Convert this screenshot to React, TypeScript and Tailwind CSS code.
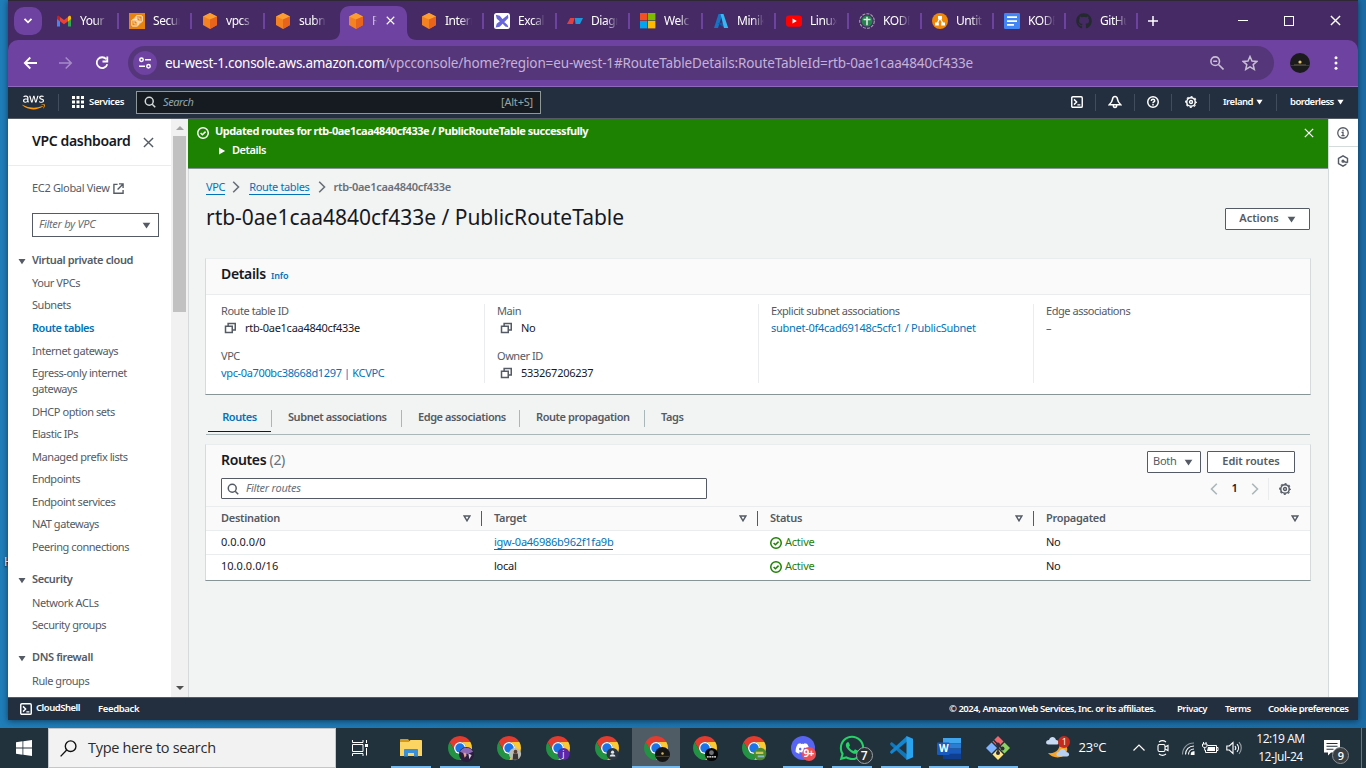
import React from "react";
import { FaAws, FaDiscord, FaGithub, FaWhatsapp } from "react-icons/fa";

/* ---------- small shared drawings ---------- */

const Caret = ({ className = "" }: { className?: string }) => (
  <svg viewBox="0 0 10 8" className={"shrink-0 " + className} fill="currentColor">
    <path d="M0.6 0.8h8.8L5 7.4z" />
  </svg>
);

const SortCaret = () => (
  <svg viewBox="0 0 10 9" className="h-[7px] w-2 shrink-0" fill="none" stroke="#545b64" strokeWidth="1.9">
    <path d="M1.4 1.4h7.2L5 7.4z" />
  </svg>
);

const Check = ({ className = "" }: { className?: string }) => (
  <svg viewBox="0 0 16 16" className={"shrink-0 " + className} fill="none" stroke="currentColor" strokeWidth="2">
    <circle cx="8" cy="8" r="7" />
    <path d="M4.8 8l2.4 2.4 4.2-4.2" />
  </svg>
);

const Search = ({ className = "" }: { className?: string }) => (
  <svg viewBox="0 0 16 16" className={"shrink-0 " + className} fill="none" stroke="currentColor" strokeWidth="2">
    <circle cx="7" cy="7" r="5.3" />
    <path d="M11 11l4 4" />
  </svg>
);

const Copy = () => (
  <svg viewBox="0 0 16 16" className="h-3 w-3 shrink-0" fill="none" stroke="#545b64" strokeWidth="2">
    <path d="M2 5.500h9V14H2z" />
    <path d="M5.500 5.500V2H15v8.500h-3.500" />
  </svg>
);

const Gear = ({ className = "" }: { className?: string }) => (
  <svg viewBox="0 0 16 16" className={"shrink-0 " + className} fill="none" stroke="currentColor">
    <circle cx="8" cy="8" r="5.700" strokeWidth="2" />
    <circle cx="8" cy="8" r="7.100" strokeWidth="1.500" strokeDasharray="2.8 2.776" strokeDashoffset="1.4" />
    <circle cx="8" cy="8" r="2" strokeWidth="1.800" />
  </svg>
);

const Shell = ({ className = "" }: { className?: string }) => (
  <svg viewBox="0 0 16 16" className={"shrink-0 " + className} fill="none" stroke="currentColor" strokeWidth="1.900">
    <rect x="1" y="1" width="14" height="14" rx="1.500" />
    <path d="M4 4.500L7.500 8 4 11.500M8.500 11.800h4" />
  </svg>
);

const Cross = ({ className = "" }: { className?: string }) => (
  <svg viewBox="0 0 12 12" className={"shrink-0 " + className} fill="none" stroke="currentColor" strokeWidth="1.500">
    <path d="M1 1l10 10M11 1L1 11" />
  </svg>
);

/* ---------- favicons ---------- */

const Cube = () => (
  <svg viewBox="0 0 16 16" className="h-4 w-4 shrink-0">
    <path d="M8 0l7 3.500v8.600L8 16 1 12.100V3.500z" fill="#f58220" />
    <path d="M8 0l7 3.500-7 3-7-3z" fill="#fb9d32" />
    <path d="M8 6.500l7-3v8.600L8 16z" fill="#e8631c" />
  </svg>
);

const Gmail = () => (
  <svg viewBox="0 0 16 16" className="h-4 w-4 shrink-0">
    <path d="M1 4v9.500h3V7z" fill="#4285f4" />
    <path d="M15 4v9.500h-3V7z" fill="#34a853" />
    <path d="M12 3.800l1-.9c1-.6 2 0 2 1.200V6l-3 2.400z" fill="#fbbc04" />
    <path d="M4 4l4 3 4-3v4.200l-4 3-4-3z" fill="#ea4335" />
    <path d="M4 3.800l-1-.9c-1-.6-2 0-2 1.200V6l3 2.400z" fill="#c5221f" />
  </svg>
);

const Ec2 = () => (
  <svg viewBox="0 0 16 16" className="h-4 w-4 shrink-0" fill="none" stroke="#fff">
    <rect width="16" height="16" fill="#e8820f" stroke="none" />
    <rect x="2.800" y="6.800" width="6.200" height="6.200" rx=".8" strokeWidth=".9" />
    <rect x="5" y="5" width="6" height="6" rx=".8" strokeWidth=".7" />
    <rect x="7" y="2.800" width="6.200" height="6.200" rx=".8" strokeWidth=".9" />
  </svg>
);

const Excalidraw = () => (
  <svg viewBox="0 0 16 16" className="h-4 w-4 shrink-0">
    <rect width="16" height="16" rx="2.500" fill="#fff" />
    <path d="M1.800 1.800l4 1 3 3.600L6.600 9 2.800 5.800zM14 1.800l.3 3.200-8.600 8.700-4 .8 1-3.700zM10.300 9l3.200 3 .8 2.200-3-.8-2.600-2.700z" fill="#6965db" />
  </svg>
);

const Diagram = () => (
  <svg viewBox="0 0 16 16" className="h-4 w-4 shrink-0">
    <path d="M3.200 5H7.500L6 11H0z" fill="#e04040" />
    <path d="M7.800 5H16l-3 6H8.500z" fill="#2196d8" />
  </svg>
);

const Microsoft = () => (
  <svg viewBox="0 0 16 16" className="h-4 w-4 shrink-0">
    <path d="M0 0h7.400v7.400H0z" fill="#f25022" />
    <path d="M8 0h7.400v7.400H8z" fill="#7fba00" />
    <path d="M0 8h7.400v7.400H0z" fill="#00a4ef" />
    <path d="M8 8h7.400v7.400H8z" fill="#ffb900" />
  </svg>
);

const Azure = () => (
  <svg viewBox="0 0 16 16" className="h-4 w-4 shrink-0">
    <path d="M5.500 1h4L5 15H1z" fill="#1673c4" />
    <path d="M4.500 10l6.500-.5 1 5.500z" fill="#0f5ba8" />
    <path d="M7.500 1h3l4.700 14H11z" fill="#38b6f1" />
  </svg>
);

const Youtube = () => (
  <svg viewBox="0 0 16 16" className="h-4 w-4 shrink-0">
    <rect y="2.400" width="16" height="11.400" rx="3" fill="#ff0000" />
    <path d="M6.500 5.600v5l4.300-2.500z" fill="#fff" />
  </svg>
);

const Kode = () => (
  <svg viewBox="0 0 16 16" className="h-4 w-4 shrink-0">
    <circle cx="8" cy="8" r="7.300" fill="none" stroke="#a9a4ad" strokeWidth="1.100" strokeDasharray="3 1.200" />
    <circle cx="8" cy="8" r="5.500" fill="#23824c" />
    <path d="M7.200 3.800h1.600v2H11.500v1.500H8.800v5H7.200v-5H4.500V5.800h2.700z" fill="#dfe9e2" />
  </svg>
);

const Drawio = () => (
  <svg viewBox="0 0 16 16" className="h-4 w-4 shrink-0">
    <circle cx="8" cy="8" r="8" fill="#f08705" />
    <path d="M8 5L5 10.500M8 5l3 5.500" stroke="#fff" strokeWidth="1.300" />
    <path d="M6 3h4v3.200H6zM3 9.500h3.800v3H3zM9.200 9.500H13v3H9.200z" fill="#fff" />
  </svg>
);

const Docs = () => (
  <svg viewBox="0 0 16 16" className="h-4 w-4 shrink-0">
    <rect width="16" height="16" rx="1.200" fill="#4285f4" />
    <path d="M3 3.300h10v1.700H3zM3 7.200h10v1.700H3zM3 11h7v1.700H3z" fill="#fff" />
  </svg>
);

const Github = () => <FaGithub className="h-4 w-4 shrink-0 text-[#24292f]" />;

/* ---------- browser chrome ---------- */

const tabs: { icon: React.FC; label: string; active?: boolean; narrow?: boolean }[] = [
  { icon: Gmail, label: "Your" },
  { icon: Ec2, label: "Secur" },
  { icon: Cube, label: "vpcs" },
  { icon: Cube, label: "subn" },
  { icon: Cube, label: "R", active: true },
  { icon: Cube, label: "Intern" },
  { icon: Excalidraw, label: "Excal" },
  { icon: Diagram, label: "Diagr" },
  { icon: Microsoft, label: "Welc" },
  { icon: Azure, label: "Minik" },
  { icon: Youtube, label: "Linux" },
  { icon: Kode, label: "KODE" },
  { icon: Drawio, label: "Untit", narrow: true },
  { icon: Docs, label: "KODE", narrow: true },
  { icon: Github, label: "GitHu", narrow: true },
];

const TabStrip = () => (
  <div className="flex h-[39px] shrink-0 items-center bg-[#462a66] pl-1.5">
    <div className="flex h-7 w-7 items-center justify-center rounded-[10px] bg-[#6d42a0]">
      <svg viewBox="0 0 10 6" className="h-1.5 w-2.5" fill="none" stroke="#fff" strokeWidth="1.800">
        <path d="M1.500 .8L5 4.300 8.500 .8" />
      </svg>
    </div>
    <div className="ml-1 flex h-full">
      {tabs.map((t, i) => (
        <div key={i} className={"relative flex h-full items-center pl-2.5 " + (t.narrow ? "w-[72px]" : "w-[73px]")}>
          {t.active && (
            <svg viewBox="0 0 87 34" className="absolute bottom-0 -left-2 h-[34px] w-[87px]" fill="#6d42a0">
              <path d="M0 34c7 0 10-4 10-10V10C10 4 14 0 20 0h47c6 0 10 4 10 10v14c0 6 3 10 10 10z" />
            </svg>
          )}
          <div className="relative flex items-center">
            <t.icon />
            <span
              className={
                "ml-2 overflow-hidden text-[12px] tracking-[-0.450px] whitespace-nowrap text-white " +
                (t.active
                  ? "w-[5px] [mask-image:linear-gradient(to_right,black,transparent)]"
                  : "w-[27px] [mask-image:linear-gradient(to_right,black_55%,transparent)]")
              }
            >
              {t.label}
            </span>
            {t.active && <Cross className="ml-[9px] h-[9px] w-[9px] text-white" />}
          </div>
          {!t.active && i !== 3 && <div className="absolute right-0 h-4 w-0.5 bg-[#6d42a0]" />}
        </div>
      ))}
    </div>
    <svg viewBox="0 0 10 10" className="ml-2.5 h-2.5 w-2.5" stroke="#fff" strokeWidth="1.500">
      <path d="M5 0v10M0 5h10" />
    </svg>
    <div className="mr-[17px] ml-auto flex items-center gap-9 text-white">
      <div className="h-px w-2.5 bg-white" />
      <div className="h-[10px] w-[10px] border border-white" />
      <Cross className="h-[11px] w-[11px]" />
    </div>
  </div>
);

const Toolbar = () => (
  <div className="shrink-0 bg-[#462a66]">
    <div className="flex h-[46px] items-center rounded-t-[10px] bg-[#6d42a0] pl-[15px]">
      <svg viewBox="0 0 14 14" className="h-3.5 w-3.5" fill="none" stroke="#fff" strokeWidth="1.800">
        <path d="M14 7H2M7.300 1.500L1.800 7l5.500 5.500" />
      </svg>
      <svg viewBox="0 0 14 14" className="ml-[22px] h-3.5 w-3.5" fill="none" stroke="#a78ac8" strokeWidth="1.600">
        <path d="M0 7h12M6.700 1.500L12.200 7l-5.500 5.500" />
      </svg>
      <svg viewBox="0 0 14 14" className="ml-[22px] h-3.5 w-3.5" fill="none" stroke="#fff" strokeWidth="1.800">
        <path d="M11.300 3.200A5.400 5.400 0 1 0 12.300 8.200" />
        <path d="M12.300 .5v5H7.500" />
      </svg>
      <div className="ml-[19px] flex h-[34px] w-[1146px] items-center rounded-full bg-[#55367a] pl-[5px]">
        <div className="flex h-6 w-6 items-center justify-center rounded-full bg-[#6d42a0]">
          <svg viewBox="0 0 12 12" className="h-3 w-3" fill="none" stroke="#fff" strokeWidth="1.500">
            <circle cx="2.500" cy="2.800" r="1.700" />
            <path d="M6 2.800h6M0 9.200h6" />
            <circle cx="9.500" cy="9.200" r="1.700" />
          </svg>
        </div>
        <div className="ml-2 font-['Noto_Sans'] text-[13.500px] tracking-[-0.130px] whitespace-nowrap text-[#c4b2d8]">
          <span className="tracking-[-0.260px] text-white">eu-west-1.console.aws.amazon.com</span>
          /vpcconsole/home?region=eu-west-1#RouteTableDetails:RouteTableId=rtb-0ae1caa4840cf433e
        </div>
        <svg viewBox="0 0 14 14" className="mr-[18px] ml-auto h-3.5 w-3.5" fill="none" stroke="#c9bfd3" strokeWidth="1.600">
          <circle cx="5.200" cy="5.200" r="4.300" />
          <path d="M8.500 8.500l5 5M3.200 5.200h4" />
        </svg>
        <svg viewBox="0 0 16 16" className="mr-4 h-4 w-4" fill="none" stroke="#c9bfd3" strokeWidth="1.500">
          <path d="M8 1.500l2 4.500 4.900.4-3.700 3.200 1.100 4.800L8 11.900l-4.300 2.500 1.100-4.800L1.100 6.400 6 6z" />
        </svg>
      </div>
      <svg viewBox="0 0 20 20" className="ml-4 h-5 w-5">
        <circle cx="10" cy="10" r="10" fill="#1b1b1d" />
        <path d="M.5 12.500h19" stroke="#3e3a33" />
        <path d="M4 11.800h12" stroke="#6b6252" strokeWidth=".7" />
        <circle cx="10" cy="9" r="1.600" fill="#e3c56a" />
      </svg>
      <svg viewBox="0 0 4 14" className="ml-6 h-3.5 w-1" fill="#fff">
        <circle cx="2" cy="1.800" r="1.500" />
        <circle cx="2" cy="7" r="1.500" />
        <circle cx="2" cy="12.200" r="1.500" />
      </svg>
    </div>
    <div className="h-px bg-[#8d68bb]" />
  </div>
);

/* ---------- AWS console ---------- */

const NavDivider = ({ className }: { className: string }) => <div className={"h-[17px] w-px bg-[#414d5c] " + className} />;

const ConsoleNav = () => (
  <div className="flex h-8 shrink-0 items-center border-b border-[#545b64] bg-[#232f3e] pb-px text-white">
    <div className="relative ml-3.5 h-[23px] w-[23px]">
      <FaAws className="absolute inset-0 h-[23px] w-[23px] [clip-path:inset(0_0_40%_0)]" />
      <FaAws className="absolute inset-0 h-[23px] w-[23px] text-[#f90] [clip-path:inset(60%_0_0_0)]" />
    </div>
    <NavDivider className="ml-[13px]" />
    <svg viewBox="0 0 12 12" className="ml-[13px] h-3 w-3" fill="#fff">
      <path d="M0 0h3v3H0zM4.500 0h3v3h-3zM9 0h3v3H9zM0 4.500h3v3H0zM4.500 4.500h3v3h-3zM9 4.500h3v3H9zM0 9h3v3H0zM4.500 9h3v3h-3zM9 9h3v3H9z" />
    </svg>
    <span className="ml-[5px] w-[35px] text-[9.500px] font-semibold tracking-[-0.350px] whitespace-nowrap">Services</span>
    <div className="ml-3 flex h-[23px] w-[405px] items-center border border-[#8d9999] bg-[#161b22] px-[7px] text-[11px]">
      <Search className="h-3 w-3 text-[#d5dbdb]" />
      <span className="ml-[7px] tracking-[-0.400px] text-[#95a5a6] italic">Search</span>
      <span className="ml-auto tracking-[-0.200px] text-[#95a5a6]">[Alt+S]</span>
    </div>
    <Shell className="ml-[530px] h-3 w-3" />
    <NavDivider className="ml-3" />
    <svg viewBox="0 0 14 14" className="ml-3 h-3.5 w-3.5" fill="none" stroke="#fff" strokeWidth="1.500">
      <path d="M7 1.500C5.300 1.500 4.600 3 4.400 4.600 4.200 6.500 3 8 1.300 9.800h11.400C11 8 9.800 6.500 9.600 4.600 9.400 3 8.700 1.500 7 1.500zM5.300 10.300c0 2.800 3.400 2.800 3.400 0" />
    </svg>
    <NavDivider className="ml-3" />
    <svg viewBox="0 0 16 16" className="ml-3 h-3 w-3" fill="none" stroke="#fff" strokeWidth="2">
      <circle cx="8" cy="8" r="7" />
      <path d="M5.700 6.500C5.700 3.400 10.300 3.600 10.300 6.300 10.300 7.900 8 7.900 8 9.500M8 10.700v1.900" />
    </svg>
    <NavDivider className="ml-3" />
    <Gear className="ml-[13px] h-3 w-3" />
    <NavDivider className="ml-3" />
    <span className="ml-[13px] w-[29px] text-[9.500px] font-semibold tracking-[-0.450px] whitespace-nowrap">Ireland</span>
    <Caret className="ml-1 h-1.5 w-[7px]" />
    <NavDivider className="ml-[13px]" />
    <span className="ml-[13px] w-[43px] text-[9.500px] font-semibold tracking-[-0.520px] whitespace-nowrap">borderless</span>
    <Caret className="ml-1 h-1.5 w-[7px]" />
  </div>
);

const sections = [
  {
    title: "Virtual private cloud",
    items: [
      "Your VPCs",
      "Subnets",
      "Route tables",
      "Internet gateways",
      "Egress-only internet gateways",
      "DHCP option sets",
      "Elastic IPs",
      "Managed prefix lists",
      "Endpoints",
      "Endpoint services",
      "NAT gateways",
      "Peering connections",
    ],
  },
  { title: "Security", items: ["Network ACLs", "Security groups"] },
  { title: "DNS firewall", items: ["Rule groups"] },
];

const Sidebar = () => (
  <div className="flex w-[180px] shrink-0 bg-white">
    <div className="w-[163px] overflow-hidden text-[#545b64]">
      <div className="flex h-[47px] items-center border-b border-[#eaeded] pl-6 text-[14px] font-semibold tracking-[-0.350px] text-[#16191f]">
        <span className="w-[97px] pb-[3px] whitespace-nowrap">VPC dashboard</span>
        <Cross className="ml-[14px] h-[11px] w-[11px] text-[#545b64]" />
      </div>
      <div className="mt-[14px] flex h-4 items-center pl-6 text-[11px] tracking-[-0.330px]">
        EC2 Global View
        <svg viewBox="0 0 12 12" className="ml-1 h-[11px] w-[11px]" fill="none" stroke="currentColor" strokeWidth="1.500">
          <path d="M5 1.500H1v9.700h10V7.500M6.500 1H11v4.500M11 1L5 7" />
        </svg>
      </div>
      <div className="mt-[17px] ml-6 flex h-[24px] w-[127px] items-center justify-between border border-[#545b64] px-1.5 pb-px text-[11px] tracking-[-0.300px] text-[#687078] italic">
        Filter by VPC
        <Caret className="mt-px mr-[1px] h-[7px] w-[9px] text-[#545b64]" />
      </div>
      <div className="mt-[14.500px]">
        {sections.map((s) => (
          <div key={s.title} className="mb-[13px]">
            <div className="flex h-[20.200px] items-start pl-2.5 text-[11px] leading-4 font-semibold tracking-[-0.380px]">
              <Caret className="mt-1.5 mr-1.5 h-[7px] w-2" />
              {s.title}
            </div>
            {s.items.map((i) => (
              <div
                key={i}
                className={
                  "py-[3.270px] pr-6 pl-6 text-[11px] leading-4 " +
                  (i === "Route tables" ? "font-semibold tracking-[-0.450px] text-[#0073bb]" : "tracking-[-0.440px]")
                }
              >
                {i}
              </div>
            ))}
          </div>
        ))}
      </div>
    </div>
    <div className="flex w-[17px] flex-col items-center bg-[#f1f1f1]">
      <svg viewBox="0 0 8 4" className="mt-[7px] h-1 w-2" fill="#a3a3a3">
        <path d="M0 4l4-4 4 4z" />
      </svg>
      <div className="mt-1.5 h-44 w-[13px] bg-[#c1c1c1]" />
      <svg viewBox="0 0 8 4" className="mt-auto mb-[7px] h-1 w-2" fill="#505050">
        <path d="M0 0l4 4 4-4z" />
      </svg>
    </div>
  </div>
);

const Flash = () => (
  <div className="flex h-[50px] shrink-0 items-start border-b border-[#879596] bg-[#1d8102] text-white">
    <Check className="mt-2 ml-[9px] h-3 w-3" />
    <div className="ml-[6px] text-[11px] font-bold whitespace-nowrap">
      <div className="mt-1 leading-4 tracking-[-0.460px]">
        Updated routes for rtb-0ae1caa4840cf433e / PublicRouteTable successfully
      </div>
      <div className="mt-[3px] flex items-center pl-1 leading-4 font-semibold tracking-[-0.450px]">
        <svg viewBox="0 0 8 8" className="mt-0.5 mr-1.5 h-2 w-[7px]" fill="#fff">
          <path d="M0 0l7 4-7 4z" />
        </svg>
        Details
      </div>
    </div>
    <Cross className="mt-[9px] mr-[14px] ml-auto h-2.5 w-2.5" />
  </div>
);

const Chevron = ({ className = "", left = false }: { className?: string; left?: boolean }) => (
  <svg viewBox="0 0 8 12" className={"h-3 w-2 shrink-0 " + className} fill="none" stroke="currentColor" strokeWidth="1.600">
    <path d={left ? "M6.800 .8L1.500 6l5.300 5.200" : "M1.200 .8L6.500 6l-5.300 5.200"} />
  </svg>
);

const Field = ({ label, children }: { label: string; children: React.ReactNode }) => (
  <div className="h-[45px] text-[11px] leading-4 whitespace-nowrap">
    <div className="tracking-[-0.450px] text-[#545b64]">{label}</div>
    <div className="mt-px flex items-center tracking-[-0.270px] text-[#16191f]">{children}</div>
  </div>
);

const Copyable = ({ children }: { children: React.ReactNode }) => (
  <span className="flex items-center gap-[9px] pl-[3px]">
    <Copy />
    {children}
  </span>
);

const DetailsCard = () => (
  <div className="mt-[28px] h-[137px] border border-[#d5dbdb] border-t-[#eaeded] border-b-[#879596] bg-white">
    <div className="flex h-9 items-center border-b border-[#eaeded] bg-[#fafafa] pb-1.5 pl-[15px]">
      <span className="w-[45px] text-[14px] font-semibold tracking-[-0.350px] text-[#16191f]">Details</span>
      <span className="mt-[5px] ml-[5px] text-[9px] font-semibold tracking-[-0.100px] text-[#0073bb]">Info</span>
    </div>
    <div className="mt-2 flex h-[80px]">
      <div className="mt-px w-[279px] border-r border-[#eaeded] pl-[15px]">
        <div className="-mt-px">
          <Field label="Route table ID">
            <Copyable>rtb-0ae1caa4840cf433e</Copyable>
          </Field>
          <Field label="VPC">
            <span className="tracking-[-0.350px] text-[#0073bb]">vpc-0a700bc38668d1297 | KCVPC</span>
          </Field>
        </div>
      </div>
      <div className="mt-px w-[274px] border-r border-[#eaeded] pl-3">
        <div className="-mt-px">
          <Field label="Main">
            <Copyable>No</Copyable>
          </Field>
          <Field label="Owner ID">
            <Copyable>533267206237</Copyable>
          </Field>
        </div>
      </div>
      <div className="mt-px w-[275px] border-r border-[#eaeded] pl-3">
        <div className="-mt-px">
          <Field label="Explicit subnet associations">
            <span className="text-[#0073bb]">subnet-0f4cad69148c5cfc1 / PublicSubnet</span>
          </Field>
        </div>
      </div>
      <div className="pl-3">
        <Field label="Edge associations">
          <span className="text-[#545b64]">–</span>
        </Field>
      </div>
    </div>
  </div>
);

const DetailTabs = () => (
  <div className="mt-[7px] mr-px ml-px flex h-[33px] shrink-0 border-b border-[#aab7b8] pl-0.5 text-[11px] font-semibold tracking-[-0.430px] whitespace-nowrap text-[#545b64]">
    <div className="flex w-[63px] items-center justify-center border-b-2 border-transparent text-[#0073bb] shadow-[0_-1px_0_#16191f_inset]">
      Routes
    </div>
    {[
      ["Subnet associations", "w-[130px]"],
      ["Edge associations", "w-[118px]"],
      ["Route propagation", "w-[125px]"],
      ["Tags", "w-[58px]"],
    ].map(([label, w]) => (
      <div key={label} className={"flex h-8 items-center pb-0.5 " + w}>
        <div className="mt-0.5 h-[17px] w-px bg-[#aab7b8]" />
        <span className="ml-4">{label}</span>
      </div>
    ))}
  </div>
);

const rows = [
  { dest: "0.0.0.0/0", target: "igw-0a46986b962f1fa9b", link: true },
  { dest: "10.0.0.0/16", target: "local", link: false },
];

const RoutesCard = () => (
  <div className="mt-[9px] h-[137px] border border-[#d5dbdb] border-t-[#eaeded] border-b-[#879596] bg-white text-[11px] tracking-[-0.240px] text-[#16191f]">
    <div className="h-[62px] border-b border-[#eaeded] bg-[#fafafa] pt-1.5 pr-[15px] pl-[15px]">
      <div className="flex h-[22px] items-center">
        <span className="pb-1.5 text-[14px] font-semibold tracking-[-0.350px]">
          Routes <span className="font-normal text-[#687078]">(2)</span>
        </span>
        <div className="ml-auto flex h-[22px] w-[54px] items-center justify-between rounded-[1px] border border-[#545b64] bg-white pr-[7px] pb-px pl-[5px] text-[#545b64]">
          Both
          <Caret className="mt-px h-[7px] w-[9px]" />
        </div>
        <div className="ml-1.5 flex h-[22px] w-[88px] items-center justify-center rounded-[1px] border border-[#545b64] bg-white pb-px font-semibold tracking-[-0.080px] text-[#545b64]">
          Edit routes
        </div>
      </div>
      <div className="mt-[5px] flex h-[21px] items-center">
        <div className="flex h-[21px] w-[486px] items-center rounded-[1px] border border-[#545b64] bg-white pl-[5px]">
          <Search className="h-3 w-3 text-[#545b64]" />
          <span className="ml-[7px] text-[#687078] italic">Filter routes</span>
        </div>
        <Chevron left className="ml-auto text-[#aab7b8]" />
        <span className="w-[33px] pb-px text-center font-semibold">1</span>
        <Chevron className="text-[#aab7b8]" />
        <div className="ml-[9px] h-[22px] w-px bg-[#eaeded]" />
        <Gear className="mr-1 ml-2.5 h-3 w-3 text-[#545b64]" />
      </div>
    </div>
    <div className="flex h-6 items-center border-b border-[#eaeded] bg-[#fafafa] pl-[15px] font-semibold tracking-[-0.300px] text-[#545b64]">
      {["Destination", "Target", "Status", "Propagated"].map((h, i) => (
        <div
          key={h}
          className={
            "flex items-center justify-between " +
            (i === 0 ? "w-[261px] pr-[10px]" : i === 3 ? "w-[265px] pl-3" : "w-[276px] pr-[10px] pl-3") +
            (i < 3 ? " h-[15px] border-r border-[#545b64]" : "")
          }
        >
          {h}
          <SortCaret />
        </div>
      ))}
    </div>
    {rows.map((r) => (
      <div key={r.dest} className="flex h-6 items-center border-b border-[#eaeded] pl-[15px] last:border-transparent">
        <div className="w-[273px] tracking-[0.020px]">{r.dest}</div>
        <div className="w-[276px]">
          <span className={r.link ? "inline-block border-b border-[#0073bb] leading-[14px] text-[#0073bb]" : ""}>{r.target}</span>
        </div>
        <div className="flex w-[276px] items-center gap-[3px] text-[#1d8102]">
          <Check className="h-3 w-3" />
          Active
        </div>
        <div>No</div>
      </div>
    ))}
  </div>
);

const Content = () => (
  <div className="flex-1 border-l border-[#d5dbdb] bg-[#f2f3f3] pr-[17px] pl-4">
    <div className="mt-[10px] flex h-4 items-center text-[11px] tracking-[-0.350px] whitespace-nowrap">
      <span className="ml-[1px] border-b border-[#0073bb] leading-[14px] text-[#0073bb]">VPC</span>
      <Chevron className="ml-[7px] text-[#687078]" />
      <span className="ml-[9px] border-b border-[#0073bb] leading-[14px] text-[#0073bb]">Route tables</span>
      <Chevron className="ml-2 text-[#687078]" />
      <span className="ml-2 font-semibold tracking-[-0.300px] text-[#687078]">rtb-0ae1caa4840cf433e</span>
    </div>
    <div className="mt-[11px] flex h-[24px] items-center justify-between pr-px pl-[1px]">
      <h1 className="text-[21px] tracking-[-0.020px] whitespace-nowrap text-[#16191f]">rtb-0ae1caa4840cf433e / PublicRouteTable</h1>
      <div className="mt-0.5 flex h-[22px] w-[85px] items-center justify-center gap-2 rounded-[1px] border border-[#545b64] bg-white pb-px text-[11px] font-semibold tracking-[-0.050px] text-[#545b64]">
        Actions
        <Caret className="mt-px h-[7px] w-[9px]" />
      </div>
    </div>
    <DetailsCard />
    <DetailTabs />
    <RoutesCard />
  </div>
);

const ConsoleFooter = () => (
  <div className="flex h-[23px] shrink-0 items-center border-t border-[#545b64] bg-[#232f3e] pl-3 text-[9.500px] font-semibold tracking-[-0.480px] whitespace-nowrap text-white">
    <Shell className="h-3 w-3" />
    <span className="ml-1 w-[44px] pb-0.5">CloudShell</span>
    <span className="ml-[18px] tracking-[-0.350px]">Feedback</span>
    <span className="ml-auto w-[206px]">© 2024, Amazon Web Services, Inc. or its affiliates.</span>
    <span className="ml-[22px] w-[29px]">Privacy</span>
    <span className="ml-[19px] w-[25px]">Terms</span>
    <span className="mr-3 ml-[18px] w-[78px]">Cookie preferences</span>
  </div>
);

const BrowserWindow = () => (
  <div className="ml-2 flex h-[720px] w-[1350px] flex-col border-t border-[#2d2833] font-['Noto_Sans',sans-serif] shadow-[0_1px_6px_rgba(0,0,0,0.5)]">
    <TabStrip />
    <Toolbar />
    <ConsoleNav />
    <div className="flex min-h-0 flex-1">
      <Sidebar />
      <div className="flex w-[1140px] flex-col">
        <Flash />
        <Content />
      </div>
      <div className="flex flex-1 flex-col items-center border-l border-[#d5dbdb] bg-white">
        <div className="flex h-[28px] w-full items-center justify-center border-b border-[#d5dbdb] pr-px">
          <svg viewBox="0 0 16 16" className="h-3 w-3" fill="none" stroke="#545b64" strokeWidth="1.700">
            <circle cx="8" cy="8" r="7" />
            <path d="M8 3.800v2M6 7.300h2v4.200M5.800 11.500h4.400" />
          </svg>
        </div>
        <svg viewBox="0 0 16 16" className="mt-2 mr-px h-3 w-3" fill="none" stroke="#545b64" strokeWidth="1.900">
          <path d="M12.500 12.300L8 14.800l-6-3.400V4.600l6-3.400 6 3.400v5.700M8.500 8.500l5.500 1.800" />
          <circle cx="8" cy="8.300" r="1.200" />
        </svg>
      </div>
    </div>
    <ConsoleFooter />
  </div>
);

/* ---------- Windows taskbar ---------- */

const Chrome = ({ badge }: { badge: React.ReactNode }) => (
  <div className="relative h-6 w-6">
    <svg viewBox="0 0 24 24" className="h-6 w-6">
      <path d="M1.610 6A12 12 0 0 1 22.390 6H12A6 6 0 0 0 6.800 15Z" fill="#e33b2e" />
      <path d="M22.390 6A12 12 0 0 1 12 24L17.200 15A6 6 0 0 0 12 6Z" fill="#fcc934" />
      <path d="M12 24A12 12 0 0 1 1.610 6L6.800 15A6 6 0 0 0 17.200 15Z" fill="#229342" />
      <circle cx="12" cy="12" r="6" fill="#fff" />
      <circle cx="12" cy="12" r="4.700" fill="#1a73e8" />
    </svg>
    <svg viewBox="0 0 16 16" className="absolute top-[11px] left-[11px] h-[15px] w-[15px]">
      {badge}
    </svg>
  </div>
);

const badges = [
  <g key="a">
    <circle cx="8" cy="8" r="8" fill="#2a1d3d" />
    <path d="M1 5a8 8 0 0 1 14 0L8 8z" fill="#8d68b4" />
    <path d="M4.500 6h2.500l1 3-2 2.500z" fill="#e7a08e" />
    <path d="M10 7l3.500 1.500L11 13z" fill="#d9cbe2" />
  </g>,
  <g key="b">
    <circle cx="7.500" cy="7.500" r="6.500" fill="#b9bdb6" />
    <circle cx="8" cy="5" r="2" fill="#5a3c30" />
    <path d="M5.500 7h5l.5 6.500h-6z" fill="#3b3536" />
  </g>,
  <g key="c">
    <circle cx="7" cy="7.500" r="6.500" fill="#5a27a6" />
    <text x="5.600" y="11" fontSize="9" fill="#fff" fontFamily="Noto Sans">j</text>
  </g>,
  <g key="d">
    <circle cx="7" cy="7.500" r="6.500" fill="#2d3742" />
    <circle cx="7" cy="5.500" r="1.700" fill="#e4e8ea" />
    <path d="M4 10c0-3 6-3 6 0z" fill="#e4e8ea" />
  </g>,
  <g key="e">
    <circle cx="8" cy="8" r="8" fill="#151515" />
    <path d="M1 10h14" stroke="#4d493f" />
    <circle cx="8" cy="7" r="1.300" fill="#d9b868" />
  </g>,
  <g key="f">
    <circle cx="8" cy="8" r="7" fill="#050505" />
    <circle cx="8" cy="6" r="2.500" fill="#6f7276" />
    <path d="M3 10.500h10" stroke="#fff" strokeWidth="1.200" strokeDasharray="2 .6" />
  </g>,
  <g key="g">
    <circle cx="7.500" cy="7.500" r="6.700" fill="#4d8a2e" />
    <path d="M3 5h8v2.500H3z" fill="#c9c75c" />
    <path d="M5 9h7v2H5z" fill="#88b9c4" />
  </g>,
];

const Explorer = () => (
  <svg viewBox="0 0 22 18" className="h-[18px] w-[22px]">
    <path d="M0 1c0-.6.400-1 1-1h7l2 2.500H0z" fill="#d69a1b" />
    <path d="M0 2.500h9L10.500 1H21c.600 0 1 .4 1 1v15H0z" fill="#fcd462" />
    <path d="M4 17.500V11c0-.600.400-1 1-1h12c.600 0 1 .4 1 1v6.500h-4V14H8v3.500z" fill="#3a8fd6" />
  </svg>
);

const VsCode = () => (
  <svg viewBox="0 0 24 24" className="h-6 w-6">
    <path d="M1 7.500L2.700 6 18 18.500V24L1.500 9z" fill="#0f78bd" />
    <path d="M1 16.500L2.700 18 18 5.500V0L1.500 15z" fill="#1486cf" />
    <path d="M17.500 0L24 2.800v18.400L17.500 24z" fill="#2aa3ee" />
  </svg>
);

const Word = () => (
  <div className="relative h-[21px] w-6">
    <svg viewBox="0 0 24 21" className="h-[21px] w-6">
      <path d="M6 0h18v5.300H6z" fill="#41a5ee" />
      <path d="M6 5.300h18v5.300H6z" fill="#2b7cd3" />
      <path d="M6 10.600h18v5.300H6z" fill="#185abd" />
      <path d="M6 15.900h18V21H6z" fill="#103f91" />
      <rect y="4.500" width="12.500" height="12.500" rx="1" fill="#185abd" />
    </svg>
    <span className="absolute top-[4px] left-0 w-[12.500px] text-center text-[10px] leading-[13px] font-bold text-white">W</span>
  </div>
);

const Git = () => (
  <svg viewBox="0 0 24 24" className="h-6 w-6">
    <path d="M12 0l5.500 5.500L12 11 6.500 5.500z" fill="#f0686e" />
    <path d="M0 12l5.500-5.500L11 12l-5.500 5.500z" fill="#80b3ff" />
    <path d="M24 12l-5.500-5.500L13 12l5.500 5.500z" fill="#8dd35f" />
    <path d="M12 24l5.500-5.500L12 13l-5.500 5.500z" fill="#ffe680" />
    <path d="M7.500 4L12 8.500V17M12 8.500l4 4" stroke="#2f2d3a" strokeWidth="1.600" fill="none" />
    <circle cx="12" cy="8.500" r="1.900" fill="#2f2d3a" />
    <circle cx="12" cy="17" r="2" fill="#2f2d3a" />
    <circle cx="16.500" cy="12.500" r="2" fill="#2f2d3a" />
  </svg>
);

const Discord = () => (
  <div className="relative h-6 w-6">
    <div className="flex h-6 w-6 items-center justify-center rounded-full bg-[#5865f2]">
      <FaDiscord className="h-[15px] w-[15px] text-white" />
    </div>
    <div className="absolute top-[11px] left-[11px] h-3.5 w-3.5 rounded-full bg-[#ed4f55] text-center text-[10px] leading-[13px] font-bold tracking-[-0.500px] text-white">
      9+
    </div>
  </div>
);

const WhatsApp = () => (
  <div className="relative h-6 w-6">
    <FaWhatsapp className="-mt-0.5 -ml-0.5 h-7 w-7 text-[#25d366]" />
    <div className="absolute top-[11px] left-4 h-[17px] w-[17px] rounded-full border border-[#9aa3a8] bg-[#2b3236] text-center text-[12px] leading-[15px] font-semibold text-white">
      7
    </div>
  </div>
);

const apps: { node: React.ReactNode; line?: string; on?: boolean }[] = [
  { node: <Explorer />, line: "w-10" },
  { node: <Chrome badge={badges[0]} />, line: "w-10" },
  { node: <Chrome badge={badges[1]} /> },
  { node: <Chrome badge={badges[2]} /> },
  { node: <Chrome badge={badges[3]} /> },
  { node: <Chrome badge={badges[4]} />, line: "w-12", on: true },
  { node: <Chrome badge={badges[5]} /> },
  { node: <Chrome badge={badges[6]} /> },
  { node: <Discord />, line: "w-10" },
  { node: <WhatsApp />, line: "w-10" },
  { node: <VsCode />, line: "w-10" },
  { node: <Word />, line: "w-10" },
  { node: <Git />, line: "w-10" },
];

const Taskbar = () => (
  <div className="mt-2 flex h-10 items-center bg-[#22323d] font-['Open_Sans','Noto_Sans',sans-serif] text-white">
    <svg viewBox="0 0 16 16" className="ml-4 h-4 w-4" fill="#fff">
      <path d="M0 2.200l6.500-.9v6.300H0zM7.300 1.200L16 0v7.600H7.300zM0 8.400h6.500v6.300L0 13.800zM7.300 8.400H16V16l-8.700-1.200z" />
    </svg>
    <div className="ml-4 flex h-10 w-72 items-center border border-[#c4c7c9] bg-[#f2f2f2] pl-[11px] text-[#2b2b2b]">
      <svg viewBox="0 0 16 16" className="h-[17px] w-[17px]" fill="none" stroke="#111" strokeWidth="1.300">
        <circle cx="10" cy="5.800" r="5" />
        <path d="M6.300 9.500L.6 15.400" />
      </svg>
      <span className="ml-[11px] text-[14.500px] tracking-[-0.300px]">Type here to search</span>
    </div>
    <svg viewBox="0 0 16 16" className="ml-4 h-4 w-4" fill="none" stroke="#fff">
      <path d="M.5 0v2.500h10.500V0M.5 16v-2.500h10.500V16M.5 4.500h10.500v7H.5zM14.500 0v3M14.500 8v7.500" />
      <path d="M13 4h3v3h-3z" fill="#fff" stroke="none" />
    </svg>
    <div className="ml-[19px] flex gap-[0.960px]">
      {apps.map((a, i) => (
        <div key={i} className={"relative flex h-10 w-12 items-center justify-center " + (a.on ? "bg-[#4f5c66]" : "")}>
          {a.node}
          {a.line && <div className={"absolute bottom-0 left-1/2 h-0.5 -translate-x-1/2 bg-[#76b9ed] " + a.line} />}
        </div>
      ))}
    </div>
    <div className="relative ml-6 h-6 w-6">
      <svg viewBox="0 0 24 24" className="h-6 w-6">
        <path d="M14 4c8 3 10 12 3 16-5 3-12 1-15-3 8 1 13-4 12-13z" fill="#f7a325" />
        <path d="M2.500 8.500C-1 8.500-.5 4 3 4c1-4 6-4 7 0 3.500 0 3.500 4.500.5 4.500z" fill="#c9daf5" />
        <path d="M13 20.500c-4 0-3-5 0-4.500 1-4 6-4 7 0 4 0 4 4.500 1 4.500z" fill="#b7d0f2" />
      </svg>
      <div className="absolute top-0 left-3 h-3 w-3 rounded-full bg-[#c42b1c] text-center text-[9px] leading-3">1</div>
    </div>
    <span className="ml-2 w-[30px] text-[13px] tracking-[-0.200px] whitespace-nowrap">23°C</span>
    <svg viewBox="0 0 12 8" className="ml-[25px] h-2 w-3" fill="none" stroke="#fff" strokeWidth="1.200">
      <path d="M.5 6.500L6 1l5.500 5.500" />
    </svg>
    <svg viewBox="0 0 12 16" className="ml-3 h-4 w-3" fill="none" stroke="#fff" strokeWidth="1.100">
      <rect x="1" y="4.500" width="7" height="7" rx="1.500" />
      <path d="M8 7l3-1.500v5L8 9M2 2c2-1.500 5-1.500 7 0M2 14c2 1.500 5 1.500 7 0" />
    </svg>
    <svg viewBox="0 0 14 14" className="ml-3 h-3.5 w-3.5" fill="none" stroke="#fff" strokeWidth="1.100">
      <path d="M1.500 13.500C1.500 7 6 2 13 2" stroke="#8e979c" />
      <path d="M4.500 13.500C4.500 8.500 8 5 13 5M7.500 13.500c0-3.200 2.200-5.500 5.500-5.500" />
      <path d="M10.300 13.500c0-1.700 1-2.700 2.700-2.700v2.700z" fill="#fff" />
    </svg>
    <svg viewBox="0 0 17 12" className="ml-[7px] h-3 w-[17px]" fill="none" stroke="#fff">
      <path d="M5.500 3.500h9v7h-11V8M14.500 5.500h1.500v3h-1.500M1.500 0v2M4 0v2M.5 2h4.500v2c0 2-4.500 2-4.500 0zM2.700 5.500v3" />
      <path d="M6 5h7v4H5z" fill="#fff" stroke="none" />
    </svg>
    <svg viewBox="0 0 17 14" className="ml-[7px] h-3.5 w-[17px]" fill="none" stroke="#fff" strokeWidth="1.100">
      <path d="M.8 5h2.500L7 1.500v11L3.300 9H.8zM9 5c1 1.200 1 2.800 0 4M11 3.200c2 2.200 2 5.400 0 7.600" />
      <path d="M13 1.200c3 3.200 3 8.400 0 11.600" stroke="#9aa3a8" />
    </svg>
    <div className="ml-[11px] w-[52px] text-center text-[12px] leading-[18px] tracking-[-0.480px] whitespace-nowrap">
      <div>12:19 AM</div>
      <div>12-Jul-24</div>
    </div>
    <div className="relative ml-[18px] h-4 w-4">
      <svg viewBox="0 0 16 16" className="h-4 w-4">
        <path d="M0 0h16v12.500H7L4 15.500v-3H0z" fill="#fff" />
        <path d="M2.500 3.500h11M2.500 6.300h11M2.500 9.200h7" stroke="#22323d" strokeWidth="1.100" />
      </svg>
      <div className="absolute top-[7px] left-2 h-[17px] w-[17px] rounded-full border border-[#8b9296] bg-[#3a3f43] text-center text-[11px] leading-[15px] font-semibold">
        9
      </div>
    </div>
    <div className="mr-1 ml-auto h-10 w-px bg-[#6a757c]" />
  </div>
);

export default function App() {
  return (
    <div className="relative h-[768px] w-[1366px] overflow-hidden bg-[linear-gradient(to_right,#1f7db8,#1b6ca5)]">
      <div className="absolute top-[553px] left-[4px] font-['Open_Sans',sans-serif] text-[12px] text-white [text-shadow:0_1px_2px_#000]">
        H
      </div>
      <div className="relative">
        <BrowserWindow />
        <Taskbar />
      </div>
    </div>
  );
}
